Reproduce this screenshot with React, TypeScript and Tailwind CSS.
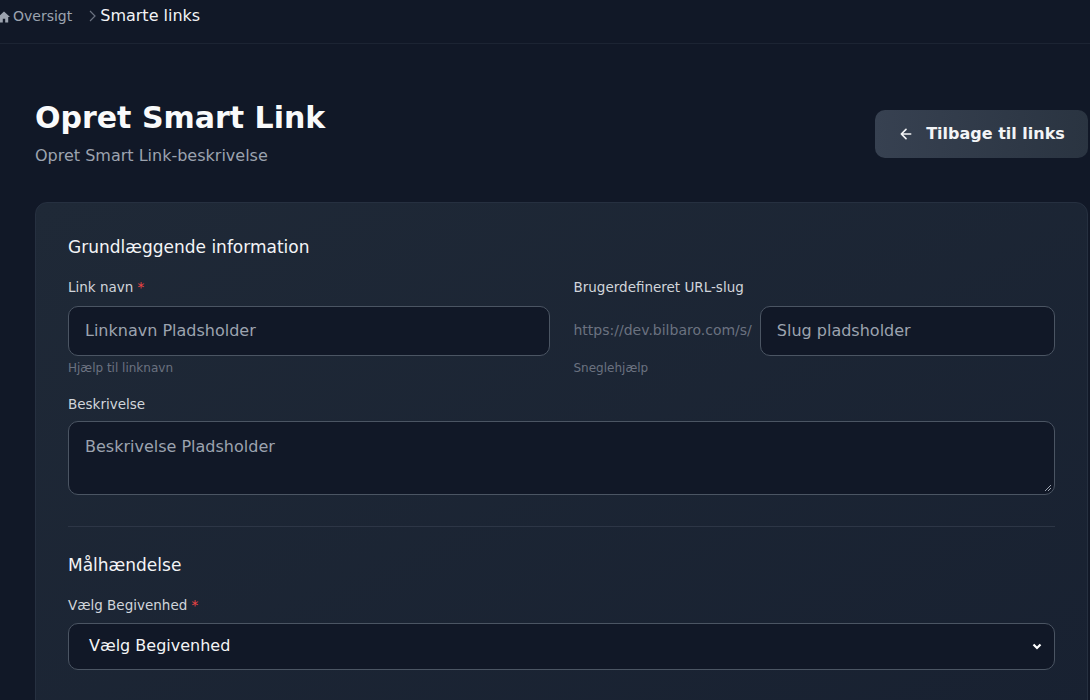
import React from "react";

export default function App() {
  const font = { fontFamily: '"DejaVu Sans", sans-serif' };
  return (
    <div style={font} className="w-[1090px] h-[700px] overflow-hidden bg-[#111827] text-white">
      <div className="h-[44px] border-b border-[#1c2433] flex items-start pt-[4px] text-[15px]">
        <span className="flex items-center gap-[3px] text-[#9ca3af] text-[14px] mt-[2px]">
          <svg width="12" height="12" viewBox="0 0 20 20" fill="#9ca3af" className="-ml-[2px]"><path d="M10 1 0 10h3v9h5v-6h4v6h5v-9h3z"/></svg>
          Oversigt
        </span>
        <svg className="ml-[16px] mt-[6px]" width="8" height="12" viewBox="0 0 8 12" fill="none" stroke="#6b7280" strokeWidth="1.2"><path d="M2 1l5 5-5 5"/></svg>
        <span className="ml-[4px] text-[#f3f4f6] text-[16px]">Smarte links</span>
      </div>
      <div className="pl-[35px] pr-[2px]">
        <div className="flex justify-between items-start mt-[56px]">
          <div>
            <h1 className="text-[30px] font-bold leading-[36px] text-[#f9fafb]">Opret Smart Link</h1>
            <p className="text-[16px] text-[#9ca3af] mt-[8px]">Opret Smart Link-beskrivelse</p>
          </div>
          <button className="mt-[10px] w-[213px] h-[48px] rounded-[10px] bg-gradient-to-r from-[#374151] to-[#2a3441] flex items-center justify-center gap-[12px] text-[16px] font-bold text-[#f3f4f6]">
            <svg width="16" height="16" viewBox="0 0 24 24" fill="none" stroke="currentColor" strokeWidth="2.5" strokeLinecap="round" strokeLinejoin="round"><path d="M19 12H5M12 19l-7-7 7-7"/></svg>
            Tilbage til links
          </button>
        </div>
        <div className="mt-[34px] rounded-[12px] bg-gradient-to-br from-[#1f2937] to-[#182131] border border-[#263040] px-[32px] pt-[32px] h-[520px]">
          <h2 className="text-[17px] text-[#f3f4f6]">Grundlæggende information</h2>
          <div className="grid grid-cols-2 gap-[24px] mt-[14px]">
            <div>
              <label className="text-[13.5px] text-[#d1d5db]">Link navn <span className="text-[#ef4444]">*</span></label>
              <div className="mt-[7px] h-[50px] rounded-[10px] border border-[#4b5563] bg-[#111827] flex items-center px-[16px] text-[16px] text-[#9ca3af]">Linknavn Pladsholder</div>
              <p className="text-[12px] text-[#6b7280] mt-[3px]">Hjælp til linknavn</p>
            </div>
            <div>
              <label className="text-[13.5px] text-[#d1d5db]">Brugerdefineret URL-slug</label>
              <div className="mt-[7px] flex items-center gap-[8px]">
                <span className="text-[14px] text-[#6b7280]">https://dev.bilbaro.com/s/</span>
                <div className="flex-1 h-[50px] rounded-[10px] border border-[#4b5563] bg-[#111827] flex items-center px-[16px] text-[16px] text-[#9ca3af]">Slug pladsholder</div>
              </div>
              <p className="text-[12px] text-[#6b7280] mt-[3px]">Sneglehjælp</p>
            </div>
          </div>
          <label className="block mt-[17px] text-[13.5px] text-[#d1d5db]">Beskrivelse</label>
          <div className="relative mt-[7px] h-[74px] rounded-[10px] border border-[#4b5563] bg-[#111827] px-[16px] pt-[13px] text-[16px] text-[#9ca3af]">
            Beskrivelse Pladsholder
            <svg className="absolute right-[2px] bottom-[2px]" width="8" height="8" viewBox="0 0 8 8" stroke="#9ca3af"><path d="M1 7 7 1M4 7 7 4"/></svg>
          </div>
          <div className="border-t border-[#2d3646] mt-[31px]" />
          <h2 className="mt-[26px] text-[17px] text-[#f3f4f6]">Målhændelse</h2>
          <label className="block mt-[17px] text-[13.5px] text-[#d1d5db]">Vælg Begivenhed <span className="text-[#ef4444]">*</span></label>
          <div className="mt-[7px] h-[47px] rounded-[10px] border border-[#4b5563] bg-[#111827] flex items-center justify-between px-[20px] pr-[12px] text-[16px] text-[#f3f4f6]">
            Vælg Begivenhed
            <svg width="10" height="10" viewBox="0 0 10 10" fill="none" stroke="white" strokeWidth="2.2"><path d="M1.5 3.5 5 7l3.5-3.5"/></svg>
          </div>
        </div>
      </div>
    </div>
  );
}
